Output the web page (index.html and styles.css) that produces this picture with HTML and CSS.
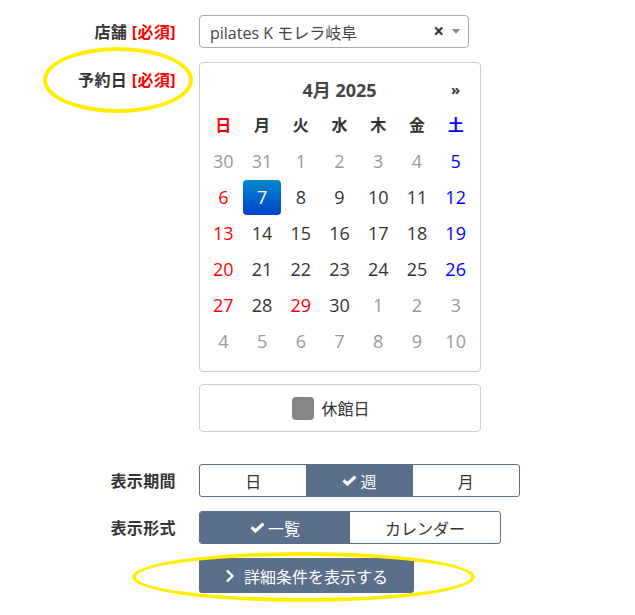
FILE: index.html
```html
<!DOCTYPE html>
<html lang="ja">

<head>
    <meta charset="UTF-8">
    <title>予約検索</title>
    <link rel="stylesheet" href="styles.css">
</head>

<body>
    <form class="search">
        <div class="row">
            <label class="label">店舗 <span class="req">[必須]</span></label>
            <div class="select">
                <span class="select-text">pilates K モレラ岐阜</span>
                <span class="select-clear">×</span>
                <span class="select-arrow"></span>
            </div>
        </div>

        <div class="row row-top">
            <label class="label label-top">予約日 <span class="req">[必須]</span></label>
            <div class="field">
                <div class="calendar">
                    <div class="cal-head">
                        <span></span>
                        <span class="cal-title">4月 2025</span>
                        <span class="cal-next">»</span>
                    </div>
                    <div class="cal-grid">
                        <span class="dow sun">日</span>
                        <span class="dow">月</span>
                        <span class="dow">火</span>
                        <span class="dow">水</span>
                        <span class="dow">木</span>
                        <span class="dow">金</span>
                        <span class="dow sat">土</span>

                        <span class="day old">30</span>
                        <span class="day old">31</span>
                        <span class="day old">1</span>
                        <span class="day old">2</span>
                        <span class="day old">3</span>
                        <span class="day old">4</span>
                        <span class="day sat">5</span>

                        <span class="day sun">6</span>
                        <span class="day active">7</span>
                        <span class="day">8</span>
                        <span class="day">9</span>
                        <span class="day">10</span>
                        <span class="day">11</span>
                        <span class="day sat">12</span>

                        <span class="day sun">13</span>
                        <span class="day">14</span>
                        <span class="day">15</span>
                        <span class="day">16</span>
                        <span class="day">17</span>
                        <span class="day">18</span>
                        <span class="day sat">19</span>

                        <span class="day sun">20</span>
                        <span class="day">21</span>
                        <span class="day">22</span>
                        <span class="day">23</span>
                        <span class="day">24</span>
                        <span class="day">25</span>
                        <span class="day sat">26</span>

                        <span class="day sun">27</span>
                        <span class="day">28</span>
                        <span class="day sun">29</span>
                        <span class="day">30</span>
                        <span class="day old">1</span>
                        <span class="day old">2</span>
                        <span class="day old">3</span>

                        <span class="day old">4</span>
                        <span class="day old">5</span>
                        <span class="day old">6</span>
                        <span class="day old">7</span>
                        <span class="day old">8</span>
                        <span class="day old">9</span>
                        <span class="day old">10</span>
                    </div>
                </div>
                <div class="legend">
                    <span class="legend-box"></span>
                    <span>休館日</span>
                </div>
            </div>
        </div>

        <div class="row row-period">
            <label class="label">表示期間</label>
            <div class="btn-group period">
                <span class="btn">日</span>
                <span class="btn on">
                    <svg class="check" width="15" height="11" viewBox="0 0 15 11">
                        <path d="M1.6 5.4 L5.4 9 L13.4 1.6" fill="none" stroke="#fff" stroke-width="3.2" />
                    </svg>週</span>
                <span class="btn">月</span>
            </div>
        </div>

        <div class="row">
            <label class="label">表示形式</label>
            <div class="btn-group format">
                <span class="btn on">
                    <svg class="check" width="15" height="11" viewBox="0 0 15 11">
                        <path d="M1.6 5.4 L5.4 9 L13.4 1.6" fill="none" stroke="#fff" stroke-width="3.2" />
                    </svg>一覧</span>
                <span class="btn">カレンダー</span>
            </div>
        </div>

        <div class="row">
            <span></span>
            <button type="button" class="btn-detail">
                <svg class="chev" width="10" height="14" viewBox="0 0 10 14">
                    <path d="M2 1.5 L7.5 7 L2 12.5" fill="none" stroke="#fff" stroke-width="2.2" />
                </svg>
                詳細条件を表示する
            </button>
        </div>
    </form>

    <div class="mark mark-date"></div>
    <div class="mark mark-detail"></div>
</body>

</html>
```

FILE: styles.css
```css
* {
    box-sizing: border-box;
    margin: 0;
    padding: 0;
}

body {
    font-family: 'Open Sans', 'Noto Sans CJK JP', sans-serif;
    color: #333;
    background: #fff;
    padding-top: 15px;
    position: relative;
    width: 635px;
    height: 615px;
    overflow: hidden;
}

.search {
    display: flex;
    flex-direction: column;
    gap: 14px;
}

.row {
    display: grid;
    grid-template-columns: 176px auto;
    column-gap: 23px;
    align-items: center;
    justify-content: start;
}

.row-top {
    align-items: start;
}

.row-period {
    margin-top: 18px;
}

.label {
    text-align: right;
    font-weight: bold;
    font-size: 16px;
    letter-spacing: 0.4px;
    line-height: 20px;
    white-space: nowrap;
}

.label-top {
    padding-top: 8px;
}

.req {
    color: #f00;
}

/* select */
.select {
    width: 270px;
    height: 33px;
    border: 1px solid #aaa;
    border-radius: 4px;
    display: flex;
    align-items: center;
    padding: 0 8px 0 10px;
}

.select-text {
    flex: 1;
    font-size: 16px;
    color: #444;
}

.select-clear {
    font-weight: bold;
    font-size: 19px;
    color: #333;
    margin-right: 8px;
    line-height: 1;
}

.select-arrow {
    width: 0;
    height: 0;
    border-left: 4px solid transparent;
    border-right: 4px solid transparent;
    border-top: 5px solid #888;
}

/* calendar */
.field {
    display: flex;
    flex-direction: column;
    gap: 12px;
}

.calendar {
    width: 282px;
    height: 310px;
    border: 1px solid #ccc;
    border-radius: 4px;
    padding: 8px 5px 0 4px;
}

.cal-head {
    display: grid;
    grid-template-columns: 1fr 5fr 1fr;
    height: 36px;
    align-items: center;
    text-align: center;
    font-weight: bold;
}

.cal-title {
    font-size: 18px;
    color: #444;
}

.cal-next {
    font-size: 15px;
    color: #333;
}

.cal-grid {
    display: grid;
    grid-template-columns: repeat(7, 1fr);
    grid-auto-rows: 36px;
    text-align: center;
}

.dow {
    font-weight: bold;
    font-size: 16px;
    line-height: 36px;
    color: #333;
}

.day {
    font-size: 18px;
    line-height: 35px;
    color: #333;
    border-radius: 4px;
    margin: 1px 0 0;
}

.day.old {
    color: #999;
}

.sun,
.day.sun {
    color: #f00;
}

.sat,
.day.sat {
    color: #00f;
}

.day.active {
    background: linear-gradient(to bottom, #0088cc, #0044cc);
    color: #fff;
}

.legend {
    width: 282px;
    height: 48px;
    border: 1px solid #ccc;
    border-radius: 4px;
    display: flex;
    align-items: center;
    justify-content: center;
    gap: 7px;
    padding-right: 18px;
    font-size: 16px;
}

.legend-box {
    width: 22px;
    height: 23px;
    border-radius: 4px;
    background: #868686;
}

/* button groups */
.btn-group {
    display: flex;
    height: 33px;
    border: 1px solid #5b6e8c;
    border-radius: 3px;
    overflow: hidden;
}

.period {
    width: 321px;
}

.format {
    width: 302px;
}

.btn {
    flex: 1;
    display: flex;
    align-items: center;
    justify-content: center;
    font-size: 16px;
    color: #333;
}

.btn.on {
    background: #5b6e8c;
    color: #fff;
}

.check {
    margin-right: 3px;
}

.btn-detail {
    width: 215px;
    height: 35px;
    border: none;
    border-radius: 3px;
    background: #5b6e8c;
    color: #fff;
    font-family: inherit;
    font-size: 16px;
    display: flex;
    align-items: center;
    justify-content: center;
    gap: 9px;
}

/* yellow annotation marks */
.mark {
    position: absolute;
    border: 4px solid #ffee00;
    border-radius: 50%;
}

.mark-date {
    left: 43px;
    top: 47px;
    width: 150px;
    height: 66px;
}

.mark-detail {
    left: 132px;
    top: 552px;
    width: 343px;
    height: 50px;
}
```
